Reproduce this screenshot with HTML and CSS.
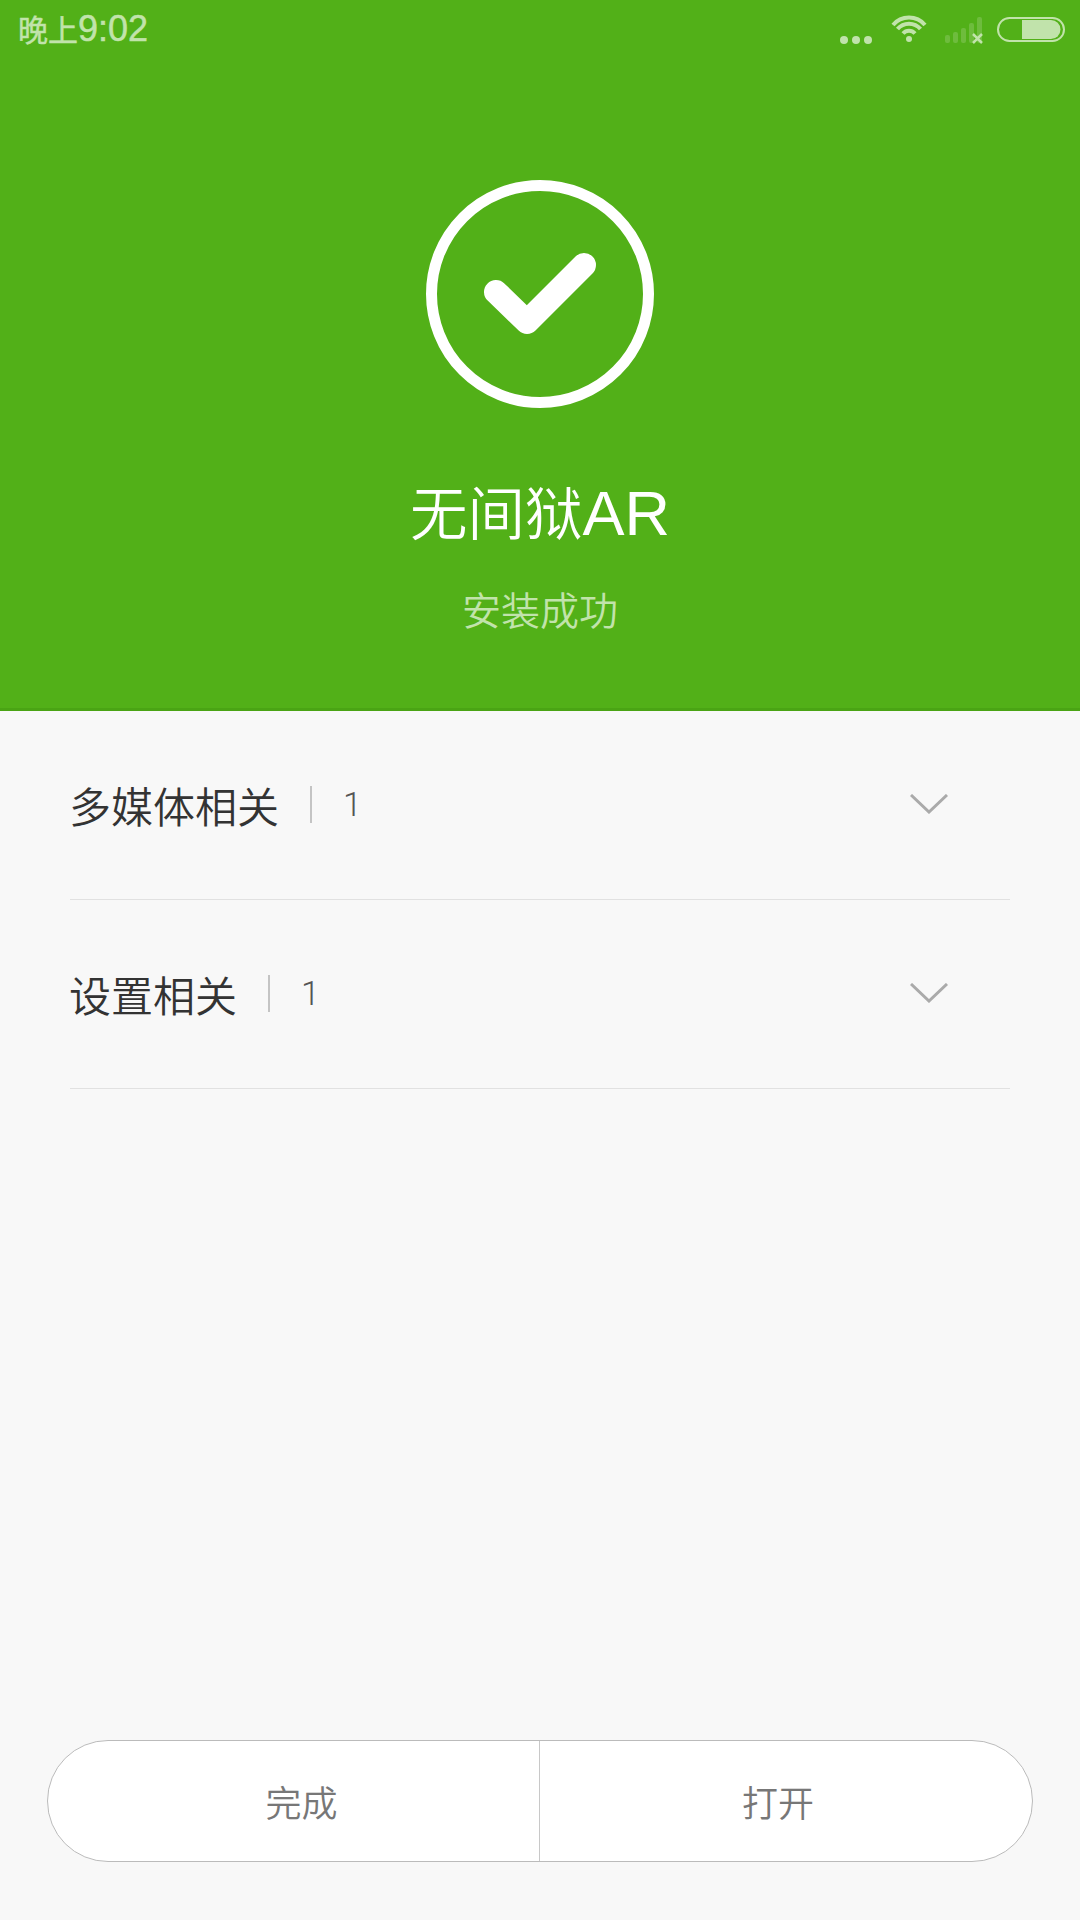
FILE: index.html
```html
<!DOCTYPE html>
<html>
<head>
	<meta charset="utf-8">
	<title>安装成功</title>
	<link rel="stylesheet" href="styles.css">
</head>
<body>

<div class="page">
	<header class="hero">
		<div class="status">
			<span class="time"><span class="time-cn">晚上</span>9:02</span>
			<div class="status-icons">
				<svg class="ic-dots" width="32" height="10" viewBox="0 0 32 10">
					<circle cx="4" cy="5" r="4"/>
					<circle cx="16" cy="5" r="4"/>
					<circle cx="28" cy="5" r="4"/>
				</svg>
				<svg class="ic-wifi" width="38" height="30" viewBox="0 0 38 30">
					<path d="M3 12 A21 21 0 0 1 35 12"/>
					<path d="M7.500 16 A15 15 0 0 1 30.500 16"/>
					<path d="M13 20.500 A8 8 0 0 1 25 20.500"/>
					<circle cx="19" cy="26" r="3"/>
				</svg>
				<svg class="ic-signal" width="38" height="28" viewBox="0 0 38 28">
					<g class="bars">
						<rect x="0" y="18" width="5" height="8" rx="2"/>
						<rect x="8" y="15" width="5" height="11" rx="2"/>
						<rect x="16" y="11" width="5" height="15" rx="2"/>
						<rect x="24" y="6" width="5" height="20" rx="2"/>
						<rect x="32" y="0" width="5" height="26" rx="2"/>
					</g>
					<path class="cross" d="M28 17 L37 26 M37 17 L28 26"/>
				</svg>
				<svg class="ic-battery" width="70" height="27" viewBox="0 0 70 27">
					<rect class="shell" x="2" y="2" width="66" height="23" rx="11.500"/>
					<path d="M26 4 H55 A9.500 9.500 0 0 1 55 23 H26 Z"/>
				</svg>
			</div>
		</div>

		<svg class="check" width="228" height="228" viewBox="0 0 228 228">
			<circle cx="114" cy="114" r="108.500"/>
			<path d="M70 112 L101 142 L158 85"/>
		</svg>
		<h1 class="app-name">无间狱<span class="app-latin">AR</span></h1>
		<p class="app-state">安装成功</p>
	</header>

	<section class="list">
		<div class="row">
			<span class="row-title">多媒体相关</span>
			<span class="row-count">1</span>
			<svg class="chevron" width="38" height="20" viewBox="0 0 38 20">
				<path d="M1 1 L19 18 L37 1"/>
			</svg>
		</div>
		<div class="row">
			<span class="row-title">设置相关</span>
			<span class="row-count">1</span>
			<svg class="chevron" width="38" height="20" viewBox="0 0 38 20">
				<path d="M1 1 L19 18 L37 1"/>
			</svg>
		</div>
	</section>

	<footer class="actions">
		<div class="btn-group">
			<button class="btn btn-left" type="button">完成</button>
			<button class="btn btn-right" type="button">打开</button>
		</div>
	</footer>
</div>

</body>
</html>
```

FILE: styles.css
```css
*{box-sizing: border-box;}

body{margin: 0;background: #f8f8f8;font-family: "Liberation Sans", "Noto Sans CJK SC", sans-serif;}

.page{height: 1920px;display: flex;flex-direction: column;}

/* green top part */
.hero{height: 711px;background: #52b018;border-bottom: 3px solid #4aa414;display: flex;flex-direction: column;align-items: center;}

.status{width: 100%;height: 58px;padding: 0 14px 0 18px;display: flex;justify-content: space-between;align-items: center;}
.time{margin-top: -2px;font-size: 36px;color: #c1e3ab;-webkit-text-stroke: .5px #c1e3ab;}
.time-cn{font-size: 30px;}
.status-icons{display: flex;align-items: flex-end;padding-bottom: 4px;padding-top: 4px;}
.status-icons svg{display: block;}
.ic-dots{fill: #c1e3ab;margin-bottom: 0;}
.ic-wifi{margin-left: 18px;margin-bottom: 2px;fill: #c1e3ab;}
.ic-wifi path{fill: none;stroke: #c1e3ab;stroke-width: 4;}
.ic-signal{margin-left: 17px;}
.ic-signal .bars{fill: #c1e3ab;opacity: .25;}
.ic-signal .cross{fill: none;stroke: #c1e3ab;stroke-width: 2.500;}
.ic-battery{margin-left: 13px;margin-bottom: 2px;fill: #c1e3ab;}
.ic-battery .shell{fill: none;stroke: #c1e3ab;stroke-width: 2;}

.check{margin-top: 122px;flex-shrink: 0;}
.check circle{fill: none;stroke: #fff;stroke-width: 11;}
.check path{fill: none;stroke: #fff;stroke-width: 24;stroke-linecap: round;stroke-linejoin: round;}

.app-name{margin: 70px 0 0;font-size: 57.500px;line-height: 70px;font-weight: 350;color: #fff;}
.app-latin{font-size: 63px;}
.app-state{margin: 37px 0 0;font-size: 39px;line-height: 50px;font-weight: 350;color: #c1e3ab;}

/* expandable rows */
.list{padding: 0 70px;}
.row{height: 189px;padding-bottom: 2px;border-bottom: 1px solid #e1e1e1;display: flex;align-items: center;}
.row-title{margin-left: -1px;font-size: 42px;font-weight: 350;color: #333;}
.row-count{margin-left: 31px;padding-left: 31px;border-left: 2px solid #c4c4c4;height: 37px;line-height: 37px;font-family: Roboto, sans-serif;font-size: 34px;font-weight: 300;color: #555;}
.chevron{margin-left: auto;margin-right: 62px;}
.chevron path{fill: none;stroke: #aaa;stroke-width: 3;}

/* bottom buttons */
.actions{margin-top: auto;padding: 0 47px 58px;}
.btn-group{height: 122px;display: flex;background: #fff;border: 1px solid #bbb;border-radius: 61px;overflow: hidden;}
.btn{border: 0;background: none;font-family: inherit;font-size: 36px;font-weight: 350;color: #777;}
.btn-left{width: 491px;padding: 0 0 0 16px;}
.btn-right{flex: 1;padding: 0 16px 0 0;border-left: 1px solid #c8c8c8;}
```
